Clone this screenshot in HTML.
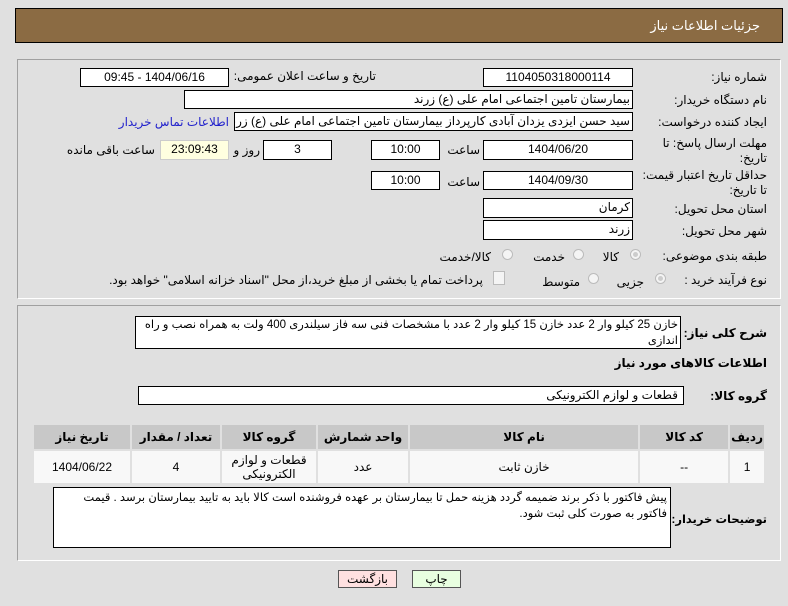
<!DOCTYPE html>
<html><head><meta charset="utf-8"><style>
body{margin:0;width:788px;height:606px;background:#e0e0e0;font-family:"Liberation Sans","DejaVu Sans",sans-serif;font-size:12px;position:relative;overflow:hidden}
.a{position:absolute}
.b{position:absolute;background:#fff;border:1px solid #000;box-sizing:border-box;direction:rtl;font-size:12px;line-height:17px;white-space:nowrap;overflow:hidden;z-index:1}
.c{text-align:center}
.l{position:absolute;direction:rtl;white-space:nowrap;font-size:12px;z-index:3}
.r{position:absolute;width:11px;height:11px;border-radius:50%;border:1px solid #bbb;background:#f4f4f4;box-sizing:border-box}
.r.on::after{content:"";position:absolute;left:2px;top:2px;width:5px;height:5px;border-radius:50%;background:#ccc}
table{border-collapse:collapse;font-size:12px;direction:rtl}
td,th{border:2px solid #e0e0e0;text-align:center}
th{background:#c8c8c8;height:22px}
td{background:#f8f8f8;height:30px}
</style></head><body>
<div class="a" style="left:15px;top:8px;width:768px;height:35px;background:#8b6b43;border:1px solid #000;box-sizing:border-box"></div>
<div class="l" style="right:28px;top:18px;color:#fff;font-size:13px">جزئیات اطلاعات نیاز</div>
<div class="a" style="left:17px;top:59px;width:764px;height:240px;border:1px solid #a0a0a0;border-right-color:#fff;border-bottom-color:#fff;box-sizing:border-box"></div>
<div class="a" style="left:17px;top:305px;width:764px;height:256px;border:1px solid #a0a0a0;border-right-color:#fff;border-bottom-color:#fff;box-sizing:border-box"></div>

<div class="l" style="right:21px;top:70px">شماره نیاز:</div>
<div class="b c" style="left:483px;top:68px;width:150px;height:19px">1104050318000114</div>
<div class="l" style="right:412px;top:69px">تاریخ و ساعت اعلان عمومی:</div>
<div class="b c" style="left:80px;top:68px;width:149px;height:19px">1404/06/16 - 09:45</div>

<div class="l" style="right:21px;top:93px">نام دستگاه خریدار:</div>
<div class="b" style="left:184px;top:90px;width:449px;height:19px;padding-right:2px">بیمارستان تامین اجتماعی امام علی (ع) زرند</div>

<div class="l" style="right:21px;top:115px">ایجاد کننده درخواست:</div>
<div class="b" style="left:234px;top:112px;width:399px;height:19px;padding-right:2px">سید حسن ایزدی یزدان آبادی کارپرداز بیمارستان تامین اجتماعی امام علی (ع) زرند</div>
<div class="l" style="right:559px;top:115px;color:#2222cc">اطلاعات تماس خریدار</div>

<div class="l" style="right:21px;top:136px;line-height:15px;text-align:right">مهلت ارسال پاسخ: تا<br>تاریخ:</div>
<div class="b c" style="left:483px;top:140px;width:150px;height:20px">1404/06/20</div>
<div class="l" style="right:308px;top:143px">ساعت</div>
<div class="b c" style="left:371px;top:140px;width:69px;height:20px">10:00</div>
<div class="b c" style="left:263px;top:140px;width:69px;height:20px">3</div>
<div class="l" style="right:528px;top:143px">روز و</div>
<div class="b c" style="left:160px;top:140px;width:69px;height:20px;background:#ffffe0;border-color:#ccc">23:09:43</div>
<div class="l" style="right:633px;top:143px">ساعت باقی مانده</div>

<div class="l" style="right:21px;top:168px;line-height:15px;text-align:right">حداقل تاریخ اعتبار قیمت:<br>تا تاریخ:</div>
<div class="b c" style="left:483px;top:171px;width:150px;height:19px">1404/09/30</div>
<div class="l" style="right:308px;top:175px">ساعت</div>
<div class="b c" style="left:371px;top:171px;width:69px;height:19px">10:00</div>

<div class="l" style="right:21px;top:202px">استان محل تحویل:</div>
<div class="b" style="left:483px;top:198px;width:150px;height:20px;padding-right:2px">کرمان</div>
<div class="l" style="right:21px;top:224px">شهر محل تحویل:</div>
<div class="b" style="left:483px;top:220px;width:150px;height:20px;padding-right:2px">زرند</div>

<div class="l" style="right:21px;top:249px">طبقه بندی موضوعی:</div>
<div class="r on" style="left:630px;top:249px"></div><div class="l" style="right:169px;top:250px">کالا</div>
<div class="r" style="left:573px;top:249px"></div><div class="l" style="right:223px;top:250px">خدمت</div>
<div class="r" style="left:502px;top:249px"></div><div class="l" style="right:297px;top:250px">کالا/خدمت</div>

<div class="l" style="right:21px;top:273px">نوع فرآیند خرید :</div>
<div class="r on" style="left:655px;top:273px"></div><div class="l" style="right:144px;top:275px">جزیی</div>
<div class="r" style="left:588px;top:273px"></div><div class="l" style="right:208px;top:275px">متوسط</div>
<div class="a" style="left:493px;top:271px;width:10px;height:12px;border:1px solid #bbb;background:#f4f4f4"></div>
<div class="l" style="right:305px;top:273px">پرداخت تمام یا بخشی از مبلغ خرید،از محل "اسناد خزانه اسلامی" خواهد بود.</div>

<div class="l" style="right:21px;top:326px;font-weight:bold">شرح کلی نیاز:</div>
<div class="b" style="left:135px;top:316px;width:546px;height:33px;white-space:normal;line-height:16px;padding:0 2px;font-size:11.5px">خازن 25 کیلو وار 2 عدد  خازن 15 کیلو وار 2 عدد با مشخصات فنی سه فاز سیلندری 400 ولت به همراه نصب و راه اندازی</div>
<div class="l" style="right:21px;top:356px;font-weight:bold">اطلاعات کالاهای مورد نیاز</div>
<div class="l" style="right:21px;top:389px;font-weight:bold">گروه کالا:</div>
<div class="b" style="left:138px;top:386px;width:546px;height:19px;padding-right:5px">قطعات و لوازم الکترونیکی</div>

<table class="a" style="left:32px;top:423px;width:734px;border:1px solid #bbb">
<tr><th style="width:26px">ردیف</th><th style="width:86px">کد کالا</th><th>نام کالا</th><th style="width:88px">واحد شمارش</th><th style="width:92px">گروه کالا</th><th style="width:86px">تعداد / مقدار</th><th style="width:94px">تاریخ نیاز</th></tr>
<tr><td>1</td><td>--</td><td>خازن ثابت</td><td>عدد</td><td style="line-height:14px">قطعات و لوازم<br>الکترونیکی</td><td>4</td><td>1404/06/22</td></tr>
</table>

<div class="l" style="right:21px;top:512px;font-weight:bold;font-size:11.5px">توضیحات خریدار:</div>
<div class="b" style="left:53px;top:487px;width:618px;height:61px;white-space:normal;line-height:16px;padding:2px 3px;font-size:11.5px">پیش فاکتور با ذکر برند ضمیمه گردد هزینه حمل تا بیمارستان بر عهده فروشنده است کالا باید به تایید بیمارستان برسد . قیمت فاکتور به صورت کلی ثبت شود.</div>

<div class="b c" style="left:338px;top:570px;width:59px;height:18px;background:#ffe0e0;border-color:#555">بازگشت</div>
<div class="b c" style="left:412px;top:570px;width:49px;height:18px;background:#e8ffe0;border-color:#555">چاپ</div>
</body></html>
